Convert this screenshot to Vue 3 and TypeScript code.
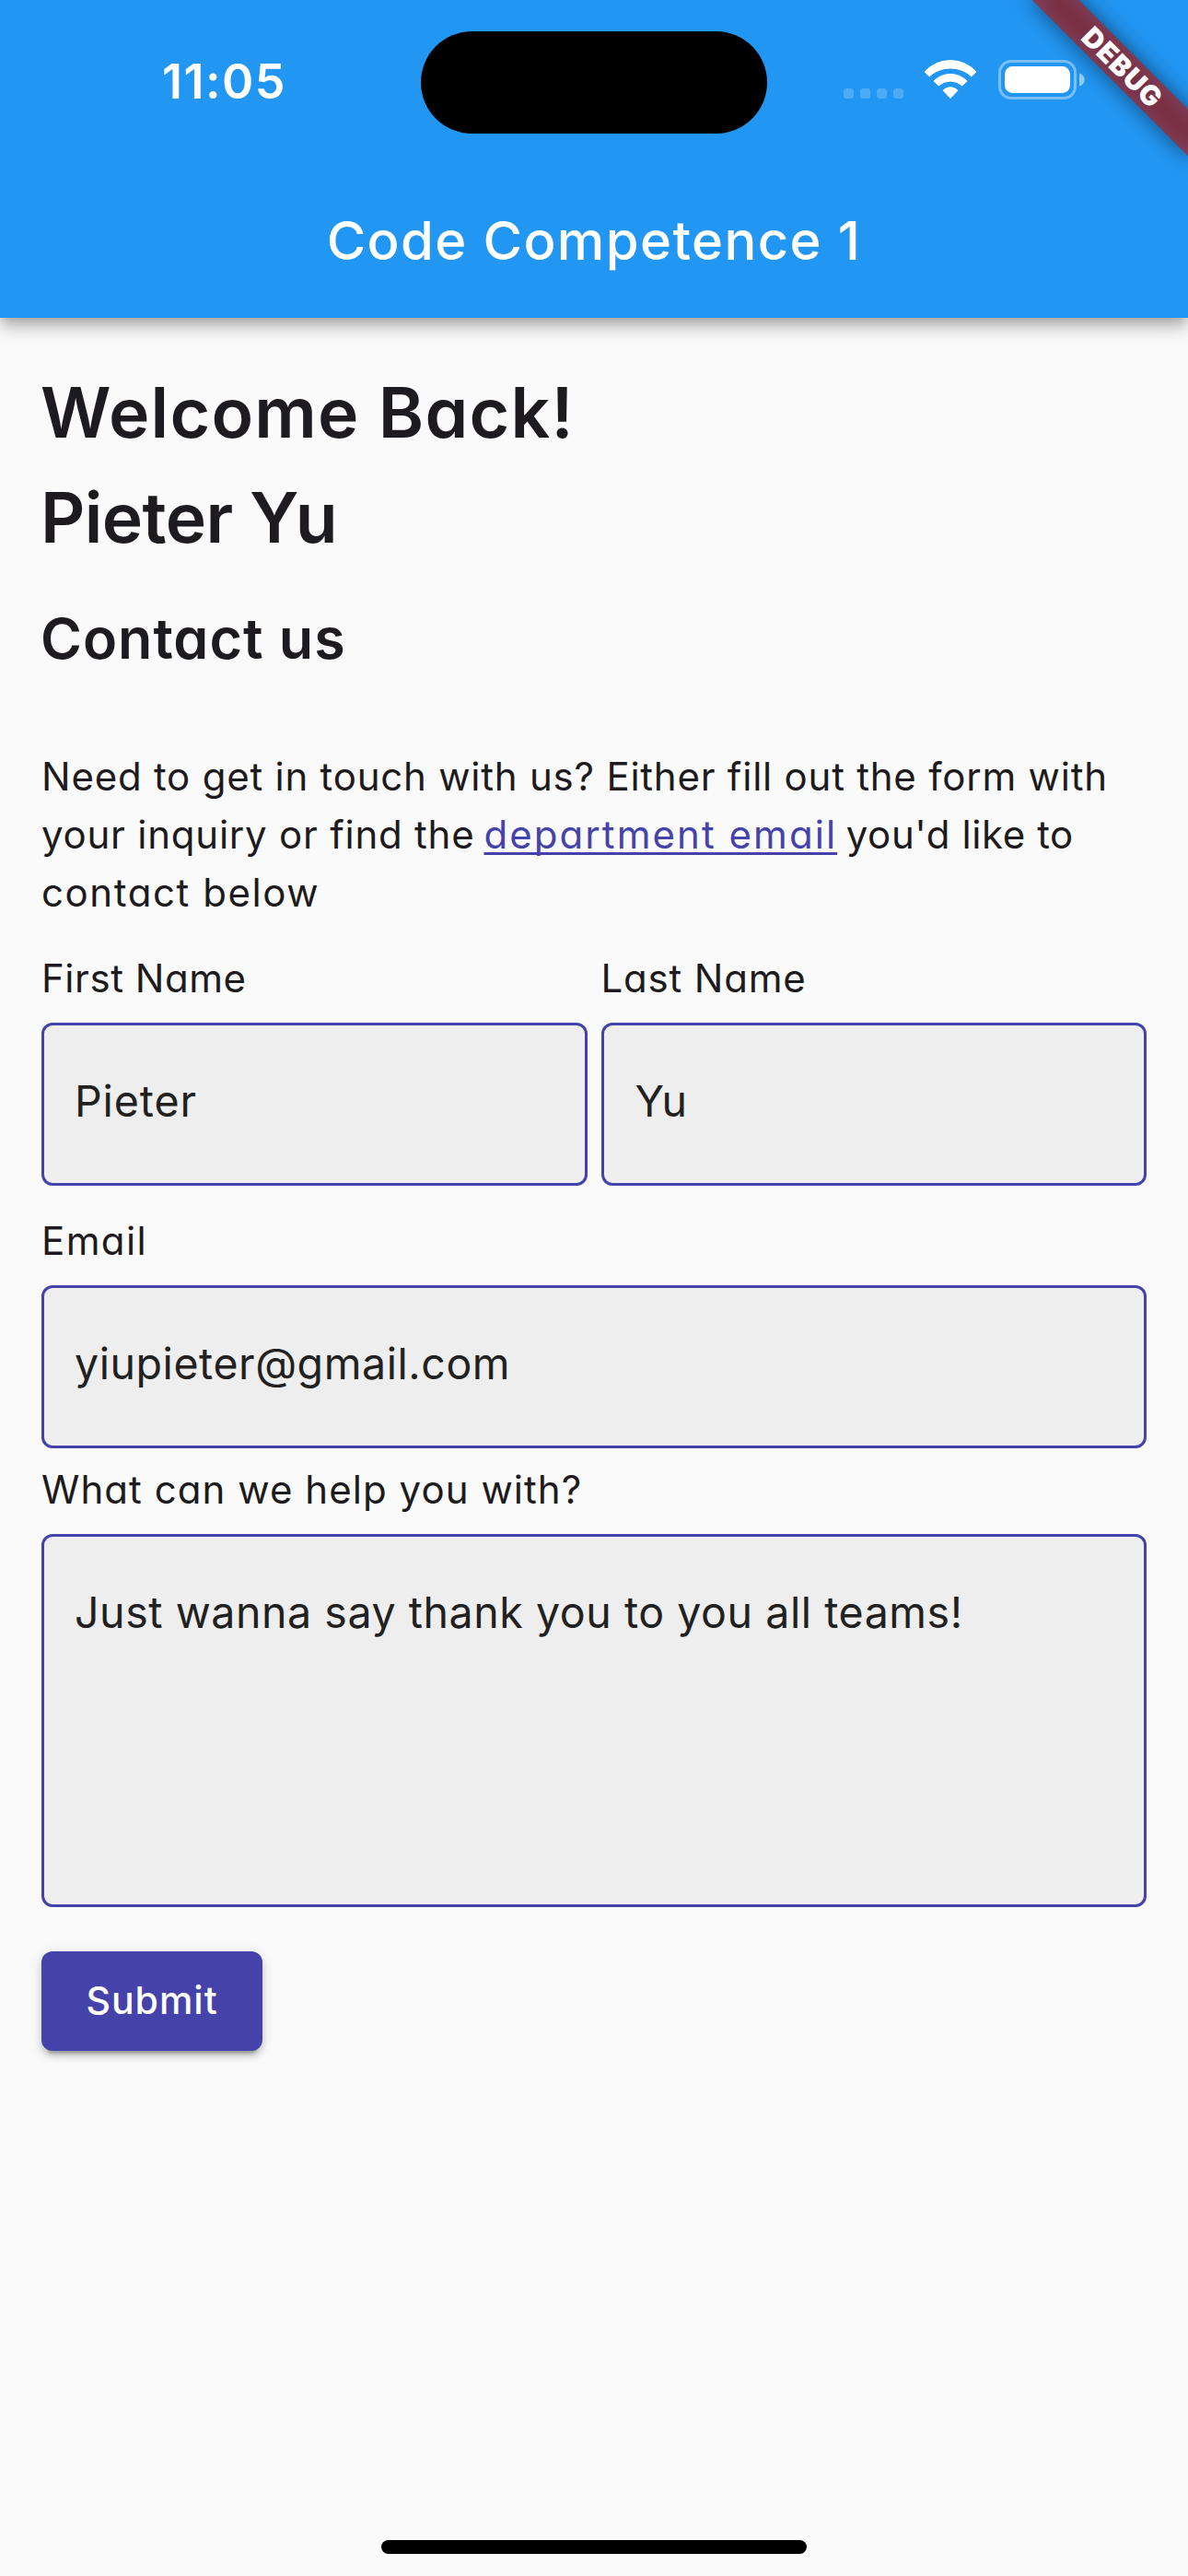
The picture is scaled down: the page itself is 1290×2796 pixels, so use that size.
<script setup lang="ts">
import { reactive } from 'vue'

interface ContactForm {
  firstName: string
  lastName: string
  email: string
  message: string
}

const form = reactive<ContactForm>({
  firstName: 'Pieter',
  lastName: 'Yu',
  email: 'yiupieter@gmail.com',
  message: 'Just wanna say thank you to you all teams!',
})
</script>

<template>
  <div class="screen">
    <header class="app-bar">
      <div class="status-bar">
        <span class="time">11:05</span>
        <div class="island"></div>
        <div class="indicators">
          <div class="cellular"><i></i><i></i><i></i><i></i></div>
          <svg class="wifi" width="58" height="43" viewBox="0 0 58 43" fill="#fff" stroke="#fff" stroke-width="1" stroke-linejoin="round">
            <path d="M1 12.9A38 38 0 0 1 57 12.9L51.8 17.8A33.8 33.8 0 0 0 6.2 17.8Z" />
            <path d="M11 23A25.2 25.2 0 0 1 47 23L41.7 28A18.6 18.6 0 0 0 16.3 28Z" />
            <path d="M21 33.2A10.9 10.9 0 0 1 37 33.2L29 41.4Z" />
          </svg>
          <svg class="battery" width="94" height="43" viewBox="0 0 94 43">
            <rect x="1.5" y="1.5" width="82" height="40" rx="12.5" fill="none" stroke="#fff" stroke-opacity=".4" stroke-width="3" />
            <rect x="7" y="7" width="71" height="29" rx="8.5" fill="#fff" />
            <path d="M88 14.5C91.5 15.6 93.7 18.3 93.7 21.5S91.5 27.4 88 28.5Z" fill="#fff" fill-opacity=".5" />
          </svg>
        </div>
      </div>
      <h1 class="title">Code Competence 1</h1>
    </header>

    <main class="content">
      <h2 class="welcome">Welcome Back!</h2>
      <h2 class="welcome user">Pieter Yu</h2>
      <h3 class="section">Contact us</h3>

      <p class="intro">
        Need to get in touch with us? Either fill out the form with<br />
        your inquiry or find the <a class="link">department email</a> <span class="after-link">you'd like to</span><br />
        <span class="last-line">contact below</span>
      </p>

      <form @submit.prevent>
        <div class="names">
          <div>
            <label class="label first" for="first">First Name</label>
            <input id="first" v-model="form.firstName" class="field first-field" type="text" />
          </div>
          <div>
            <label class="label last" for="last">Last Name</label>
            <input id="last" v-model="form.lastName" class="field last-field" type="text" />
          </div>
        </div>

        <label class="label email" for="email">Email</label>
        <input id="email" v-model="form.email" class="field" type="text" />

        <label class="label message" for="message">What can we help you with?</label>
        <textarea id="message" v-model="form.message" class="field area" spellcheck="false"></textarea>

        <button class="submit" type="submit">Submit</button>
      </form>
    </main>

    <div class="home-indicator"></div>

    <div class="debug-corner">
      <div class="debug-banner"><span>DEBUG</span></div>
    </div>
  </div>
</template>

<style>
body {
  margin: 0;
  background: #fafafa;
}
</style>

<style scoped>
.screen {
  position: relative;
  display: flex;
  flex-direction: column;
  width: 1290px;
  height: 2796px;
  overflow: hidden;
  background: #fafafa;
  color: #1d1b20;
  font-family: Inter, "Liberation Sans", sans-serif;
}

.app-bar {
  flex: none;
  height: 345px;
  background: #2196f3;
  color: #fff;
  box-shadow:
    0 6px 12px -3px rgba(0, 0, 0, 0.2),
    0 12px 15px 0 rgba(0, 0, 0, 0.14),
    0 3px 30px 0 rgba(0, 0, 0, 0.12);
}

.status-bar {
  display: grid;
  grid-template-columns: 1fr 376px 1fr;
  align-items: center;
  height: 177px;
}

.time {
  padding-left: 176px;
  font-size: 52px;
  font-weight: 600;
  line-height: 62px;
  letter-spacing: 1.5px;
}

.island {
  height: 111px;
  margin-top: 1px;
  border-radius: 56px;
  background: #000;
}

.indicators {
  display: flex;
  align-items: flex-end;
  height: 43px;
  margin: 0 0 4px 83px;
}

.cellular {
  display: flex;
  gap: 7px;
  margin: 0 22px 1px 0;
}

.cellular i {
  width: 11px;
  height: 11px;
  border-radius: 3px;
  background: rgba(255, 255, 255, 0.2);
}

.wifi {
  margin-right: 23px;
}

.title {
  margin: 0;
  font-size: 58px;
  font-weight: 500;
  line-height: 168px;
  letter-spacing: 1.38px;
  text-align: center;
}

.content {
  flex: 1;
  padding: 46px 45px 0;
}

.welcome,
.section {
  margin: 0 0 0 -1px;
  font-weight: 600;
  font-feature-settings: "cv11";
}

.welcome {
  font-size: 75px;
  line-height: 114px;
  letter-spacing: 1.25px;
}

.user {
  letter-spacing: -0.6px;
}

.section {
  margin-top: 26px;
  font-size: 61px;
  line-height: 96px;
  letter-spacing: 1px;
}

.intro {
  margin: 70px 0 30px;
  font-size: 42px;
  line-height: 63px;
  letter-spacing: 0.77px;
  white-space: nowrap;
  font-feature-settings: "cv11";
}

.link {
  margin: 0 -3px 0 -2.5px;
  color: #4543a9;
  letter-spacing: 2.05px;
  text-decoration: underline;
  text-decoration-thickness: 2.5px;
  text-decoration-skip-ink: none;
  text-underline-offset: 4px;
}

.after-link {
  letter-spacing: 0.58px;
}

.last-line {
  letter-spacing: 1.58px;
}

.names {
  display: grid;
  grid-template-columns: 1fr 1fr;
  gap: 15px;
}

.label {
  display: block;
  margin-bottom: 17px;
  font-size: 42px;
  line-height: 63px;
  font-feature-settings: "cv11";
}

.first {
  letter-spacing: 0.55px;
}

.last {
  letter-spacing: 0.8px;
}

.email {
  margin-top: 28px;
  letter-spacing: 1.4px;
}

.message {
  margin-top: 13px;
  letter-spacing: 1.05px;
}

.field {
  display: block;
  box-sizing: border-box;
  width: 100%;
  height: 177px;
  margin: 0;
  padding: 0 33px 7px;
  border: 3px solid #4543a9;
  border-radius: 12px;
  outline: none;
  background: #eee;
  color: #212121;
  font-family: inherit;
  font-size: 46.5px;
  letter-spacing: 0.56px;
}

.first-field {
  letter-spacing: 0.9px;
}

.last-field {
  padding-left: 34px;
  letter-spacing: -0.8px;
}

.area {
  height: 405px;
  padding: 52px 33px 0;
  line-height: 60px;
  resize: none;
  overflow: hidden;
}

.submit {
  display: block;
  width: 240px;
  height: 108px;
  margin: 48px 0 0;
  padding: 0 0 2px;
  border: 0;
  border-radius: 12px;
  background: #4543a9;
  color: #fff;
  font-family: inherit;
  font-size: 41px;
  font-weight: 500;
  line-height: 106px;
  letter-spacing: 1px;
  box-shadow:
    0 9px 3px -6px rgba(0, 0, 0, 0.2),
    0 6px 6px 0 rgba(0, 0, 0, 0.14),
    0 3px 15px 0 rgba(0, 0, 0, 0.12);
}

.home-indicator {
  align-self: center;
  width: 462px;
  height: 15px;
  margin-bottom: 24px;
  border-radius: 8px;
  background: #000;
}

.debug-corner {
  position: absolute;
  top: 0;
  right: 0;
  width: 300px;
  height: 300px;
  overflow: hidden;
  pointer-events: none;
}

/* Ribbon centred on the diagonal that passes 72px in from the corner */
.debug-banner {
  position: absolute;
  top: 54px;
  left: 108px;
  width: 240px;
  height: 36px;
  transform: rotate(45deg);
}

.debug-banner::before,
.debug-banner::after {
  content: "";
  position: absolute;
  inset: 0;
}

.debug-banner::before {
  background: rgba(0, 0, 0, 0.5);
  filter: blur(12px);
}

.debug-banner::after {
  background: rgba(183, 28, 28, 0.63);
}

.debug-banner span {
  position: absolute;
  inset: 0 0 0 3px;
  z-index: 1;
  color: #fff;
  font-size: 30px;
  font-weight: 900;
  line-height: 36px;
  letter-spacing: 1px;
  text-align: center;
}
</style>
